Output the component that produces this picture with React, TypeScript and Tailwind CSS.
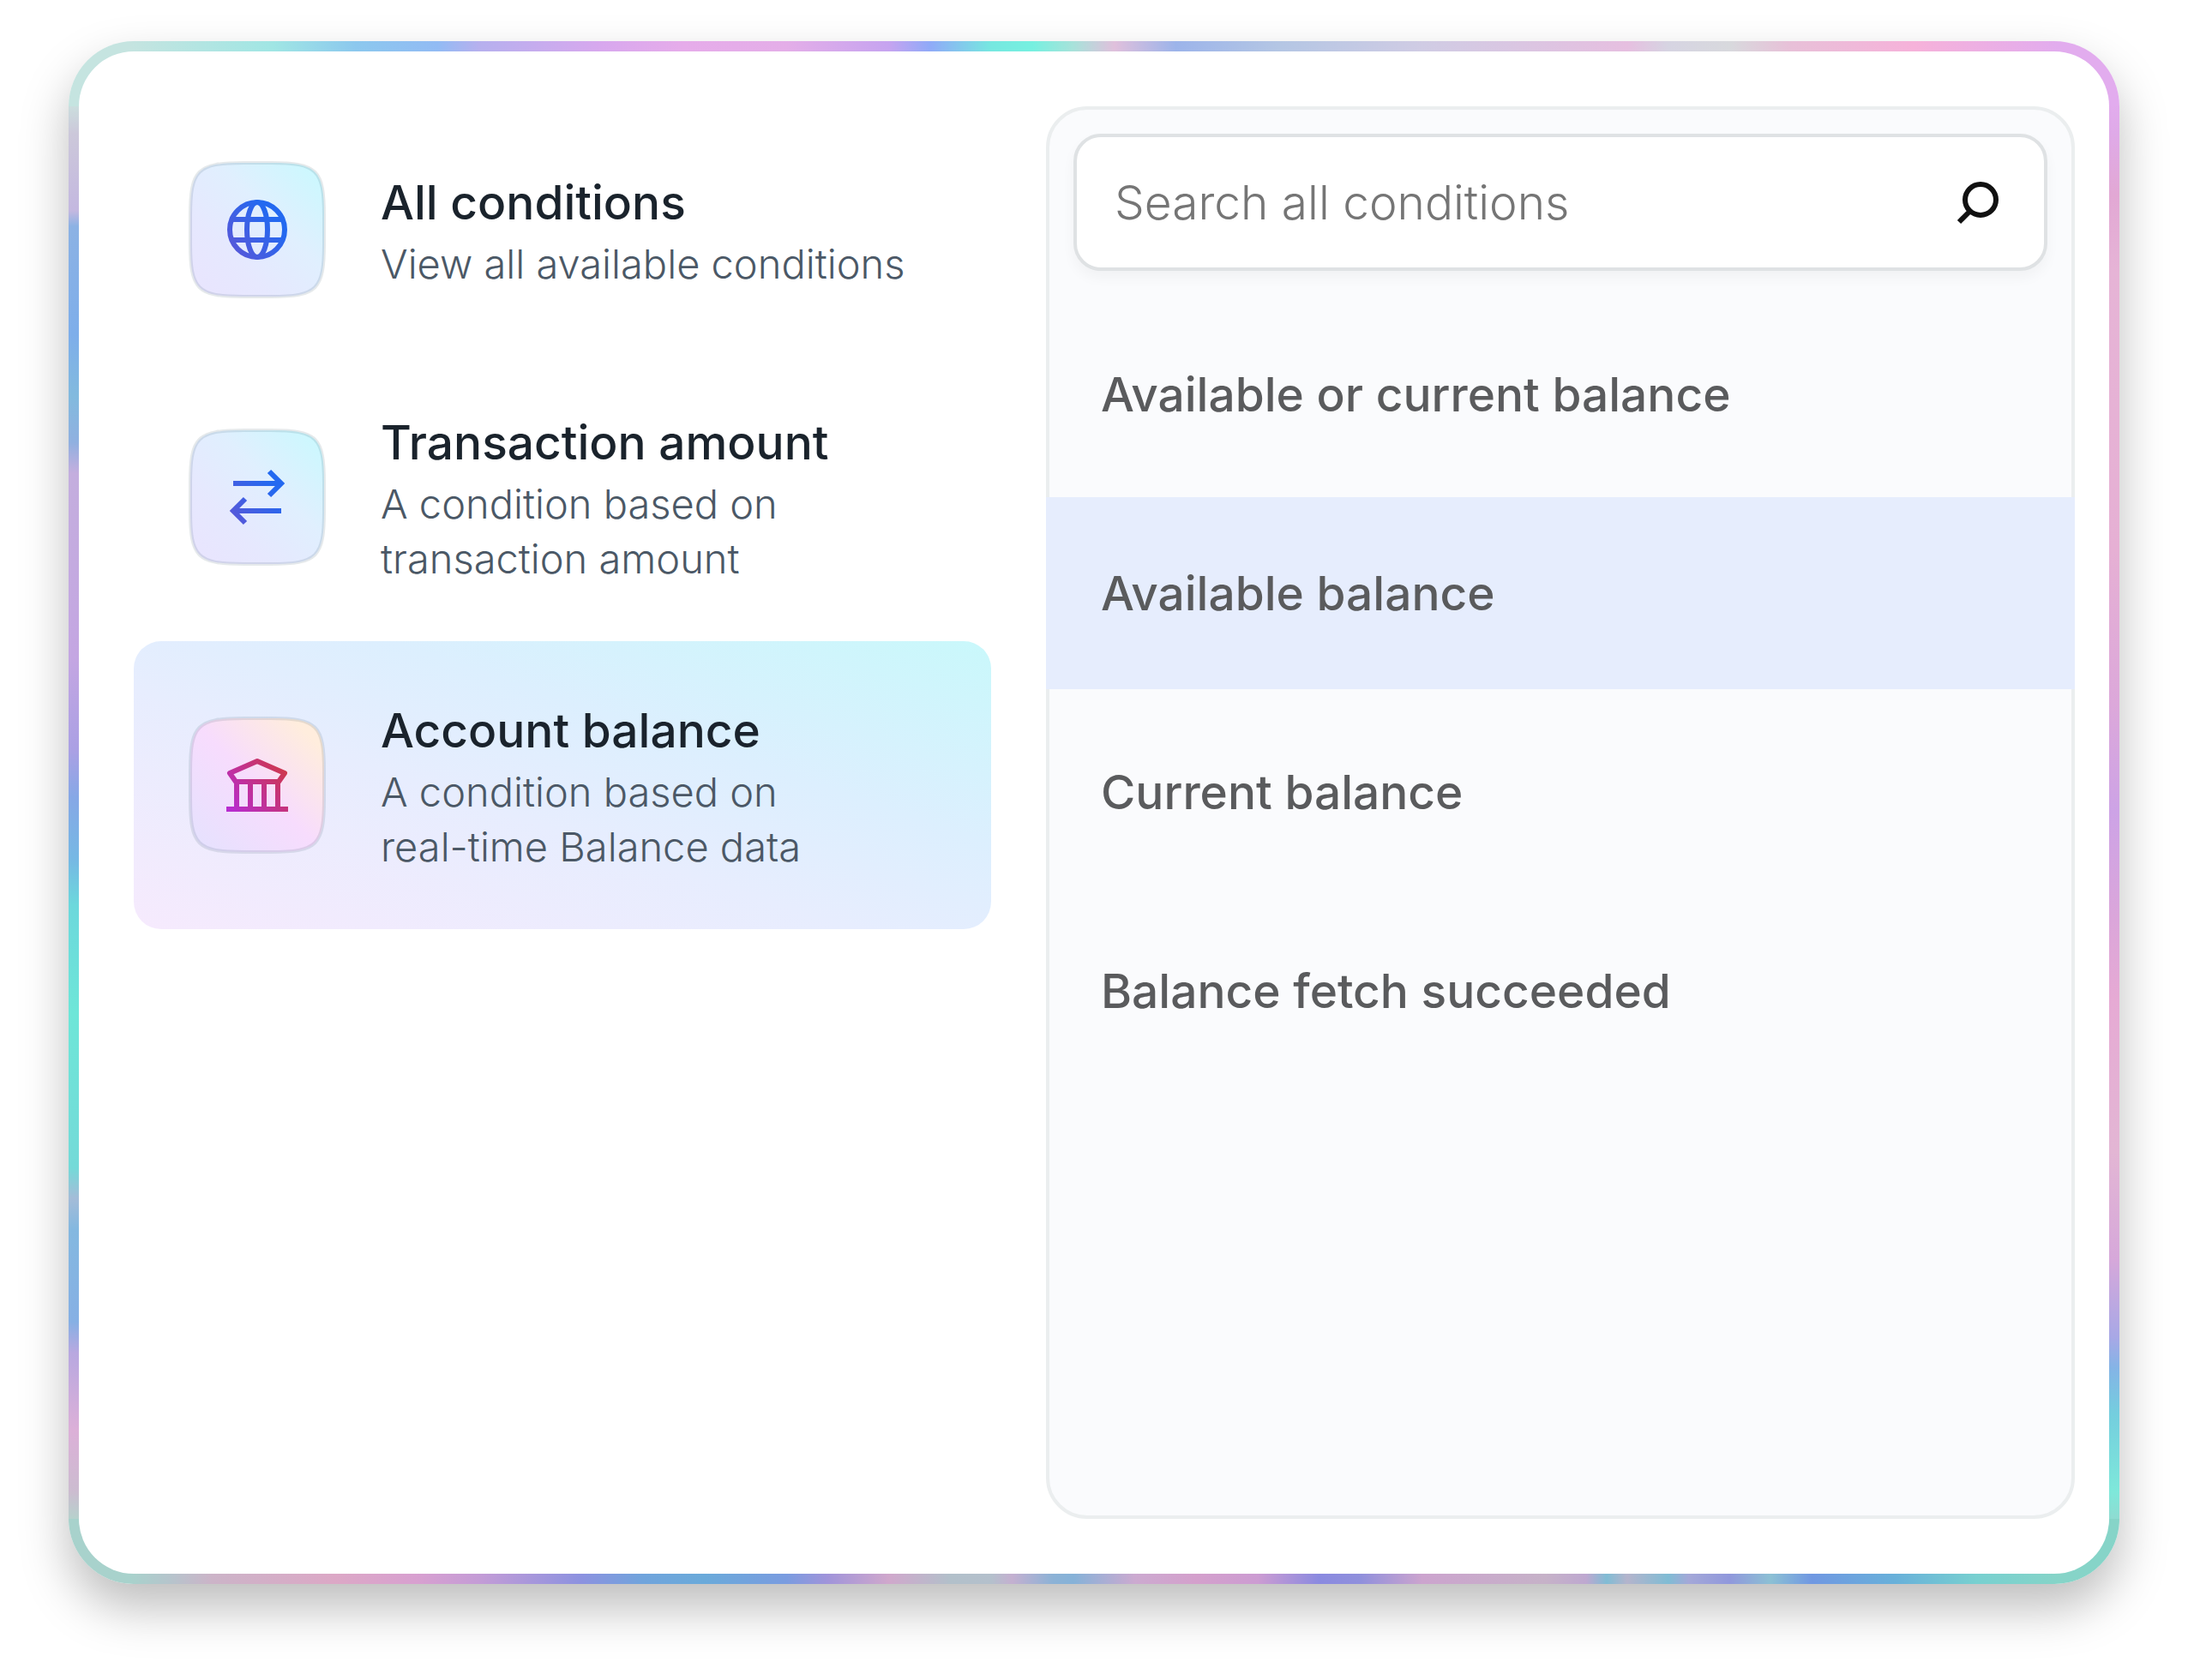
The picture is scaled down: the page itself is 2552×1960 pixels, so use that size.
import type { ReactNode } from "react";

type Tone = "blue" | "pink";

type Category = {
  title: string;
  lines: string[];
  icon: ReactNode;
  tone: Tone;
  active?: boolean;
};

// Soft square behind each icon; the icon itself is drawn on a 72 unit grid in the middle.
function IconTile({ id, tone, children }: { id: string; tone: Tone; children: ReactNode }) {
  return (
    <svg viewBox="0 0 160 160" className="size-40 shrink-0" fill="none" aria-hidden="true">
      <defs>
        <linearGradient id={`${id}-tile`} x1="0" y1="1" x2="1" y2="0">
          {tone === "blue" ? (
            <>
              <stop offset="0" stopColor="#e9e4fe" />
              <stop offset="0.3" stopColor="#e6e8fe" />
              <stop offset="0.6" stopColor="#e0effe" />
              <stop offset="0.95" stopColor="#cbf8fe" />
            </>
          ) : (
            <>
              <stop offset="0" stopColor="#e4e2fe" />
              <stop offset="0.5" stopColor="#f7dcfd" />
              <stop offset="0.88" stopColor="#ffeddd" />
            </>
          )}
        </linearGradient>
        <linearGradient id={`${id}-ink`} gradientUnits="userSpaceOnUse" x1="4" y1="62" x2="66" y2="12">
          <stop offset="0" stopColor={tone === "blue" ? "#5957d8" : "#b72dcf"} />
          <stop offset="0.8" stopColor={tone === "blue" ? "#2369f0" : "#c93567"} />
          <stop offset="1" stopColor={tone === "blue" ? "#2369f0" : "#cf3a4a"} />
        </linearGradient>
      </defs>
      <path
        d="M2 64C2 10 10 2 64 2H96C150 2 158 10 158 64V96C158 150 150 158 96 158H64C10 158 2 150 2 96Z"
        fill={`url(#${id}-tile)`}
        stroke="#2a4a5a"
        strokeOpacity="0.12"
        strokeWidth="4"
      />
      <g transform="translate(44 44)" stroke={`url(#${id}-ink)`} strokeWidth="6">
        {children}
      </g>
    </svg>
  );
}

const globe = (
  <>
    <circle cx="36" cy="36" r="32" />
    <ellipse cx="36" cy="36" rx="12" ry="32" />
    <path d="M6 24h60M6 48h60" />
  </>
);

const transfer = (
  <>
    <path d="M8 20h57M50 6l14 14-14 14" />
    <path d="M64 52H7M22 38L8 52l14 14" />
  </>
);

const bank = (
  <>
    <path d="M11 32L4 22 36 8l32 14-7 10z" strokeLinejoin="round" />
    <path d="M12 32v32M28 32v32M44 32v32M60 32v32M0 64h72" />
  </>
);

const categories: Category[] = [
  { title: "All conditions", lines: ["View all available conditions"], icon: globe, tone: "blue" },
  {
    title: "Transaction amount",
    lines: ["A condition based on", "transaction amount"],
    icon: transfer,
    tone: "blue",
  },
  {
    title: "Account balance",
    lines: ["A condition based on", "real-time Balance data"],
    icon: bank,
    tone: "pink",
    active: true,
  },
];

const conditions = [
  { label: "Available or current balance" },
  { label: "Available balance", active: true },
  { label: "Current balance" },
  { label: "Balance fetch succeeded" },
];

// Iridescent frame, one gradient for each side.
const frame = [
  "[--t:linear-gradient(to_right,#c5e4e0_3%,#a0e6e4_10%,#8cc8ee_14%,#92bbf4_18%,#b6b0ee_20%,#d8a8ee_26%,#e6acea_30%,#e4aee8_35%,#c6a4f0_40%,#90aaf8_42%,#76e8e0_45%,#76f0e0_47%,#a8e2da_49%,#e0c0dc_51%,#9cb4ea_54%,#b4c6e4_59%,#d0cce4_66%,#e6bfe0_76%,#d6d4e2_78%,#d8d9dd_81%,#e8c0d8_84%,#f6b2da_90%,#e2acee_97%)]",
  "[--b:linear-gradient(to_right,#a8d2cc_3%,#b6c4cc_5%,#ccb4c8_7%,#dca8c6_13%,#d8a0d0_17%,#c49cd6_20%,#8c92e0_25%,#70a4dc_28%,#6aaada_31%,#7a9ce0_35%,#a094da_37%,#d0a8cc_40%,#b2c0ca_43%,#b4c0cc_45%,#c4b0d0_46%,#8cb2d6_48%,#86b2d8_49%,#ccaad0_52%,#d4a0cc_55%,#cc9cd2_58%,#8a8ae0_61%,#9090dc_63%,#cca4ce_66%,#c6b2c8_72%,#bea8d0_74%,#80bcd4_75%,#b4b4cc_76%,#80bcd4_78%,#a4a8d8_79%,#9098dc_81%,#8cc0d4_83%,#7098e2_85%,#68b0da_89%,#78d0d0_93%,#86d4c8_97%)]",
  "[--l:linear-gradient(to_bottom,#cbe0de_4%,#ccc8da_6%,#c4b8e0_11%,#8cb2e4_12%,#7eaeea_19%,#82bade_23%,#90b0e0_26%,#c4aede_28%,#c4a6e2_40%,#aaa0e4_46%,#86a8e6_49%,#76b8e4_53%,#6cd8dc_56%,#6ee6d8_63%,#74dad8_73%,#a4bcd8_75%,#84b8e0_77%,#86b0e4_83%,#b8a8e0_85%,#dcb0d8_90%,#ccbcd0_94%,#b4d4cc_96%)]",
  "[--r:linear-gradient(to_bottom,#e2acee_4%,#dfaae8_6%,#e2a8d4_10%,#e6b4d6_15%,#e6b0d4_33%,#dca8da_43%,#cda3e6_50%,#dba6da_57%,#e6aad4_62%,#e3b6d4_72%,#d6a8da_79%,#a8a8e6_84%,#84b4e6_86%,#74cede_89%,#7ee8da_94%,#90dad0_96%)]",
  "[background:var(--t)_top/100%_76px_no-repeat,var(--b)_bottom/100%_76px_no-repeat,var(--l)_left/50%_100%_no-repeat,var(--r)_right/50%_100%_no-repeat]",
].join(" ");

function SearchIcon() {
  return (
    <svg viewBox="0 0 52 52" className="size-[52px] shrink-0" fill="none" stroke="#111" strokeWidth="6" aria-hidden="true">
      <circle cx="30" cy="23" r="18" />
      <path d="M18 36L5 49" />
    </svg>
  );
}

function CategoryButton({ id, category }: { id: string; category: Category }) {
  return (
    <button
      type="button"
      aria-pressed={category.active ?? false}
      className={`flex w-full items-center gap-16 rounded-[32px] p-16 text-left ${
        category.active ? "bg-[linear-gradient(to_top_right,#f6eafd,#e7edfe_42%,#dceffe_65%,#c9f8fb)]" : ""
      }`}
    >
      <IconTile id={id} tone={category.tone}>
        {category.icon}
      </IconTile>
      <span className="block">
        <span className="block text-[55px] leading-[80px] font-medium text-[#1a232c]">{category.title}</span>
        {category.lines.map((line) => (
          <span key={line} className="block text-[47px] leading-[64px] font-light text-[#4b5866]">
            {line}
          </span>
        ))}
      </span>
    </button>
  );
}

export default function App() {
  return (
    <main className="min-h-screen bg-white px-20 pt-12 pb-28 font-['Inter',sans-serif]">
      <div className={`rounded-[76px] p-3 shadow-[0_28px_56px_rgba(0,0,0,0.26)] ${frame}`}>
        <div className="flex min-h-[1776px] gap-16 rounded-[64px] bg-white py-16 pr-10 pl-16">
          <nav aria-label="Condition categories" className="w-[1000px] shrink-0">
            {categories.map((category, index) => (
              <CategoryButton key={category.title} id={`category-${index}`} category={category} />
            ))}
          </nav>

          <section className="min-w-0 flex-1 rounded-[48px] border-4 border-[#ebeeef] bg-[#fafbfd]">
            <div className="p-7">
              <div className="flex h-40 items-center rounded-[32px] border-4 border-[#dfe2e4] bg-white pr-13 pl-11 shadow-[0_8px_16px_rgba(0,0,0,0.04)]">
                <input
                  type="search"
                  aria-label="Search all conditions"
                  placeholder="Search all conditions"
                  className="min-w-0 flex-1 bg-transparent text-[55px] font-light text-[#222] outline-none placeholder:text-[#757575]"
                />
                <SearchIcon />
              </div>
            </div>
            <ul className="-mx-1 mt-1 space-y-2">
              {conditions.map((condition) => (
                <li key={condition.label}>
                  <button
                    type="button"
                    aria-pressed={condition.active ?? false}
                    className={`flex h-56 w-full items-center px-16 text-left text-[55px] font-medium text-[#5a5b5d] ${
                      condition.active ? "bg-[#e6edfd]" : ""
                    }`}
                  >
                    {condition.label}
                  </button>
                </li>
              ))}
            </ul>
          </section>
        </div>
      </div>
    </main>
  );
}
